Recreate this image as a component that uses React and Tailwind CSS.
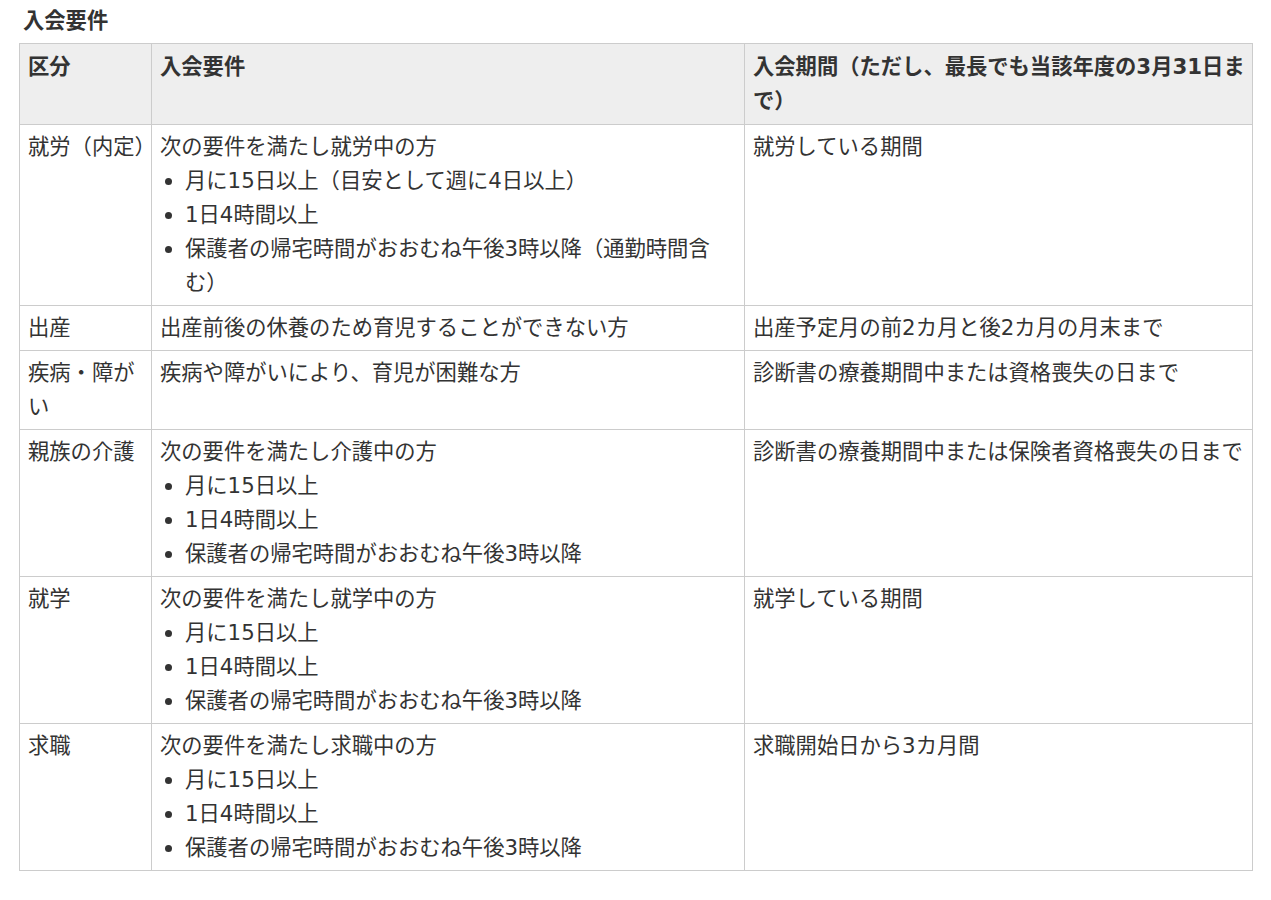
import React from "react";

const font = { fontFamily: '"DejaVu Sans", "Noto Sans CJK JP", sans-serif' };

const rows = [
  {
    kind: "就労（内定）",
    lead: "次の要件を満たし就労中の方",
    items: ["月に15日以上（目安として週に4日以上）", "1日4時間以上", "保護者の帰宅時間がおおむね午後3時以降（通勤時間含む）"],
    period: "就労している期間",
  },
  { kind: "出産", lead: "出産前後の休養のため育児することができない方", period: "出産予定月の前2カ月と後2カ月の月末まで" },
  { kind: "疾病・障がい", lead: "疾病や障がいにより、育児が困難な方", period: "診断書の療養期間中または資格喪失の日まで" },
  {
    kind: "親族の介護",
    lead: "次の要件を満たし介護中の方",
    items: ["月に15日以上", "1日4時間以上", "保護者の帰宅時間がおおむね午後3時以降"],
    period: "診断書の療養期間中または保険者資格喪失の日まで",
  },
  {
    kind: "就学",
    lead: "次の要件を満たし就学中の方",
    items: ["月に15日以上", "1日4時間以上", "保護者の帰宅時間がおおむね午後3時以降"],
    period: "就学している期間",
  },
  {
    kind: "求職",
    lead: "次の要件を満たし求職中の方",
    items: ["月に15日以上", "1日4時間以上", "保護者の帰宅時間がおおむね午後3時以降"],
    period: "求職開始日から3カ月間",
  },
];

const cell = "border border-[#cccccc] px-2 py-[5px] align-top";

export default function App() {
  return (
    <div className="bg-white text-[#333333] text-[21.3px] leading-[34px] pt-[4px] pb-8" style={font}>
      <h2 className="ml-[23px] mb-[5px] font-bold">入会要件</h2>
      <table className="ml-[19px] w-[1234px] table-fixed border-collapse">
        <colgroup>
          <col className="w-[132px]" />
          <col className="w-[593px]" />
          <col />
        </colgroup>
        <thead>
          <tr className="bg-[#eeeeee]">
            <th className={`${cell} py-[6px] text-left font-bold`}>区分</th>
            <th className={`${cell} py-[6px] text-left font-bold`}>入会要件</th>
            <th className={`${cell} py-[6px] pr-0 text-left font-bold`}>入会期間（ただし、最長でも当該年度の3月31日まで）</th>
          </tr>
        </thead>
        <tbody>
          {rows.map((r) => (
            <tr key={r.kind}>
              <td className={`${cell} pr-0`}>{r.kind}</td>
              <td className={cell}>
                <div>{r.lead}</div>
                {r.items && (
                  <ul className="list-disc pl-[25px]">
                    {r.items.map((it) => (
                      <li key={it}>{it}</li>
                    ))}
                  </ul>
                )}
              </td>
              <td className={cell}>{r.period}</td>
            </tr>
          ))}
        </tbody>
      </table>
    </div>
  );
}
